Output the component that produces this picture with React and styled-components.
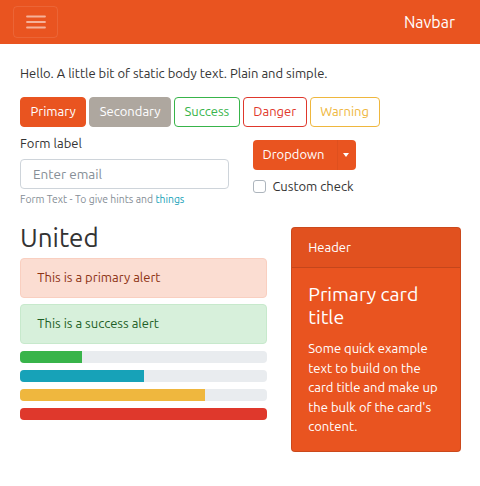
import React from 'react';
import styled, { createGlobalStyle } from 'styled-components';

const GlobalStyle = createGlobalStyle`
  html, body {
    margin: 0;
    padding: 0;
    background: #ffffff;
  }
  body {
    font-family: 'Ubuntu', 'Noto Sans', sans-serif;
    font-size: 13px;
    line-height: 1.5;
    color: #333333;
  }
  * { box-sizing: border-box; }
`;

const colors = {
  primary: '#E95420',
  secondary: '#AEA79F',
  success: '#38B44A',
  danger: '#DF382C',
  warning: '#EFB73E',
  info: '#17A2B8',
};

// Navbar
const Navbar = styled.nav`
  height: 44px;
  background: ${colors.primary};
  display: flex;
  align-items: center;
  justify-content: space-between;
  padding: 0 25px 0 13px;
`;

const Toggler = styled.button`
  width: 45px;
  height: 32px;
  background: transparent;
  border: 1px solid rgba(255, 255, 255, 0.1);
  border-radius: 4px;
  display: flex;
  align-items: center;
  justify-content: center;
  padding: 0;
`;

const Brand = styled.span`
  color: #ffffff;
  font-size: 16px;
  line-height: 1;
`;

// Page
const Main = styled.main`
  padding: 20px 19px 20px 20px;
`;

const Lead = styled.p`
  margin: 0 0 13px;
`;

const ButtonRow = styled.div`
  display: flex;
  gap: 3px;
`;

const Button = styled.button`
  font-family: inherit;
  font-size: 13px;
  line-height: 19.5px;
  padding: 4.5px 9.5px;
  border-radius: 4px;
  cursor: pointer;
  border: 1px solid ${p => p.$color};
  background: ${p => (p.$outline ? 'transparent' : p.$color)};
  color: ${p => (p.$outline ? p.$color : '#ffffff')};
`;

const Row = styled.div`
  display: grid;
  grid-template-columns: ${p => p.$cols};
  column-gap: 24px;
  margin-top: ${p => p.$top || 0}px;
`;

const Label = styled.label`
  display: block;
  margin-bottom: 5px;
`;

const Input = styled.input`
  display: block;
  width: 100%;
  height: 30px;
  padding: 4px 12px;
  font-family: inherit;
  font-size: 13.5px;
  color: #495057;
  border: 1px solid #ced4da;
  border-radius: 4px;
  &::placeholder { color: #868e96; }
`;

const HelpText = styled.small`
  display: block;
  margin-top: 3px;
  font-size: 10.4px;
  color: #868e96;
`;

const SplitGroup = styled.div`
  display: inline-flex;
  margin-top: 6px;
  border-radius: 4px;
  overflow: hidden;
`;

const SplitMain = styled.button`
  font-family: inherit;
  font-size: 13px;
  line-height: 19.5px;
  height: 30px;
  padding: 0 12px 0 10px;
  border: none;
  background: ${colors.primary};
  color: #fff;
`;

const SplitToggle = styled.button`
  width: 19px;
  height: 30px;
  border: none;
  border-left: 1px solid rgba(0, 0, 0, 0.04);
  background: ${colors.primary};
  display: flex;
  align-items: center;
  justify-content: center;
  padding: 0 2px 0 0;
  &::after {
    content: '';
    border-top: 4px solid #fff;
    border-left: 3.5px solid transparent;
    border-right: 3.5px solid transparent;
  }
`;

const Check = styled.label`
  display: flex;
  align-items: center;
  gap: 7px;
  margin-top: 7px;
`;

const CheckBox = styled.span`
  width: 13px;
  height: 13px;
  border: 1px solid #adb5bd;
  border-radius: 3px;
  background: #fff;
`;

const Heading = styled.h1`
  margin: 0 0 5px;
  font-size: 26px;
  font-weight: 400;
  line-height: 31px;
  color: #333;
`;

const Alert = styled.div`
  padding: 9.25px 16.25px;
  margin-bottom: 6px;
  border: 1px solid ${p => p.$border};
  background: ${p => p.$bg};
  color: ${p => p.$fg};
  border-radius: 4px;
`;

const Progress = styled.div`
  height: 12px;
  background: #e9ecef;
  border-radius: 4px;
  overflow: hidden;
  margin-top: 7px;
`;

const Bar = styled.div`
  height: 100%;
  background: ${p => p.$color};
`;

const Card = styled.div`
  margin-top: 5px;
  background: ${colors.primary};
  border: 1px solid rgba(0, 0, 0, 0.125);
  border-radius: 4px;
  color: #fff;
  overflow: hidden;
  align-self: start;
`;

const CardHeader = styled.div`
  padding: 9.5px 16.25px;
  background: rgba(0, 0, 0, 0.03);
  border-bottom: 1px solid rgba(0, 0, 0, 0.125);
`;

const CardBody = styled.div`
  padding: 15px 16.25px 14px;
`;

const CardTitle = styled.h4`
  margin: 0 0 9.75px;
  font-size: 19.5px;
  font-weight: 400;
  line-height: 1.2;
`;

const CardText = styled.p`
  margin: 0;
`;

const progress = [
  { value: 25, color: colors.success },
  { value: 50, color: colors.info },
  { value: 75, color: colors.warning },
  { value: 100, color: colors.danger },
];

const App = () => (
  <>
    <GlobalStyle />
    <Navbar>
      <Toggler aria-label="Toggle navigation">
        <svg width="20" height="16" viewBox="0 0 20 16">
          <path d="M1 2.5h18M1 8h18M1 13.5h18" stroke="rgba(255,255,255,0.55)" strokeWidth="1.8" strokeLinecap="round" />
        </svg>
      </Toggler>
      <Brand>Navbar</Brand>
    </Navbar>
    <Main>
      <Lead>Hello. A little bit of static body text. Plain and simple.</Lead>
      <ButtonRow>
        <Button $color={colors.primary}>Primary</Button>
        <Button $color={colors.secondary}>Secondary</Button>
        <Button $outline $color={colors.success}>Success</Button>
        <Button $outline $color={colors.danger}>Danger</Button>
        <Button $outline $color={colors.warning}>Warning</Button>
      </ButtonRow>
      <Row $cols="1fr 1fr" $top={7}>
        <div>
          <Label>Form label</Label>
          <Input type="email" placeholder="Enter email" />
          <HelpText>
            Form Text - To give hints and <span style={{ color: '#17A2B8' }}>things</span>
          </HelpText>
        </div>
        <div>
          <SplitGroup>
            <SplitMain>Dropdown</SplitMain>
            <SplitToggle aria-label="Toggle dropdown" />
          </SplitGroup>
          <Check>
            <CheckBox />
            Custom check
          </Check>
        </div>
      </Row>
      <Row $cols="247px 170px" $top={15}>
        <div>
          <Heading>United</Heading>
          <Alert $bg="#fbddd2" $border="#f9cfc0" $fg="#8c3213">This is a primary alert</Alert>
          <Alert $bg="#d7f0db" $border="#c7e9cc" $fg="#1d5e26">This is a success alert</Alert>
          {progress.map(p => (
            <Progress key={p.color}>
              <Bar $color={p.color} style={{ width: `${p.value}%` }} />
            </Progress>
          ))}
        </div>
        <Card>
          <CardHeader>Header</CardHeader>
          <CardBody>
            <CardTitle>Primary card title</CardTitle>
            <CardText>
              Some quick example text to build on the card title and make up the bulk of the card's content.
            </CardText>
          </CardBody>
        </Card>
      </Row>
    </Main>
  </>
);

export default App;
